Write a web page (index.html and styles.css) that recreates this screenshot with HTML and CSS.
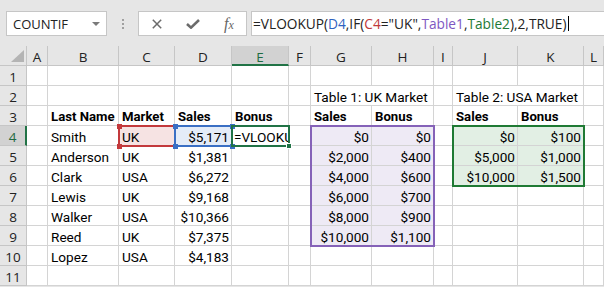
FILE: index.html
```html
<!DOCTYPE html>
<html>
<head>
<meta charset="utf-8">
<link rel="stylesheet" href="styles.css">
</head>
<body>
<div class="app">
  <header class="toolbar">
    <div class="namebox"><span class="name">COUNTIF</span><span class="dd"></span></div>
    <div class="grip"><i></i><i></i><i></i></div>
    <div class="fxbtns">
      <svg class="ico" width="10" height="10" viewBox="0 0 10 10"><path d="M0.8 0.8 L9.2 9.2 M9.2 0.8 L0.8 9.2" stroke="#6b6b6b" stroke-width="1.5" fill="none"/></svg>
      <svg class="ico" width="14" height="10" viewBox="0 0 14 10"><path d="M1 5 L5 8.6 L13 1" stroke="#6b6b6b" stroke-width="2.6" fill="none"/></svg>
      <span class="fx">f<span class="fxx">x</span></span>
    </div>
    <div class="formula"><span>=VLOOKUP(<span class="r-blue">D4</span>,IF(<span class="r-red">C4</span>="UK",<span class="r-purple">Table1</span>,<span class="r-green">Table2</span>),2,TRUE)</span><span class="caret"></span></div>
  </header>
  <div class="sheet">
    <div class="grid">
      <div class="corner"><span class="tri"></span></div>
      <div class="ch">A</div><div class="ch">B</div><div class="ch">C</div><div class="ch">D</div><div class="ch active">E</div><div class="ch">F</div><div class="ch">G</div><div class="ch">H</div><div class="ch">I</div><div class="ch">J</div><div class="ch">K</div><div class="ch">L</div>

      <div class="rh">1</div>
      <div class="c"></div><div class="c"></div><div class="c"></div><div class="c"></div><div class="c"></div><div class="c"></div><div class="c"></div><div class="c"></div><div class="c"></div><div class="c"></div><div class="c"></div><div class="c"></div>

      <div class="rh">2</div>
      <div class="c"></div><div class="c"></div><div class="c"></div><div class="c"></div><div class="c"></div><div class="c"></div>
      <div class="c span2">Table 1: UK Market</div><div class="c"></div><div class="c span2">Table 2: USA Market</div><div class="c"></div>

      <div class="rh">3</div>
      <div class="c"></div><div class="c b">Last Name</div><div class="c b">Market</div><div class="c b">Sales</div><div class="c b">Bonus</div><div class="c"></div>
      <div class="c b">Sales</div><div class="c b">Bonus</div><div class="c"></div><div class="c b">Sales</div><div class="c b">Bonus</div><div class="c"></div>

      <div class="rh active">4</div>
      <div class="c"></div><div class="c">Smith</div><div class="c f-red">UK</div><div class="c n f-blue">$5,171</div><div class="c edit">=VLOOKU</div><div class="c"></div>
      <div class="c n f-purple">$0</div><div class="c n f-purple">$0</div><div class="c"></div><div class="c n f-green">$0</div><div class="c n f-green">$100</div><div class="c"></div>

      <div class="rh">5</div>
      <div class="c"></div><div class="c">Anderson</div><div class="c">UK</div><div class="c n">$1,381</div><div class="c"></div><div class="c"></div>
      <div class="c n f-purple">$2,000</div><div class="c n f-purple">$400</div><div class="c"></div><div class="c n f-green">$5,000</div><div class="c n f-green">$1,000</div><div class="c"></div>

      <div class="rh">6</div>
      <div class="c"></div><div class="c">Clark</div><div class="c">USA</div><div class="c n">$6,272</div><div class="c"></div><div class="c"></div>
      <div class="c n f-purple">$4,000</div><div class="c n f-purple">$600</div><div class="c"></div><div class="c n f-green">$10,000</div><div class="c n f-green">$1,500</div><div class="c"></div>

      <div class="rh">7</div>
      <div class="c"></div><div class="c">Lewis</div><div class="c">UK</div><div class="c n">$9,168</div><div class="c"></div><div class="c"></div>
      <div class="c n f-purple">$6,000</div><div class="c n f-purple">$700</div><div class="c"></div><div class="c"></div><div class="c"></div><div class="c"></div>

      <div class="rh">8</div>
      <div class="c"></div><div class="c">Walker</div><div class="c">USA</div><div class="c n">$10,366</div><div class="c"></div><div class="c"></div>
      <div class="c n f-purple">$8,000</div><div class="c n f-purple">$900</div><div class="c"></div><div class="c"></div><div class="c"></div><div class="c"></div>

      <div class="rh">9</div>
      <div class="c"></div><div class="c">Reed</div><div class="c">UK</div><div class="c n">$7,375</div><div class="c"></div><div class="c"></div>
      <div class="c n f-purple">$10,000</div><div class="c n f-purple">$1,100</div><div class="c"></div><div class="c"></div><div class="c"></div><div class="c"></div>

      <div class="rh">10</div>
      <div class="c"></div><div class="c">Lopez</div><div class="c">USA</div><div class="c n">$4,183</div><div class="c"></div><div class="c"></div>
      <div class="c"></div><div class="c"></div><div class="c"></div><div class="c"></div><div class="c"></div><div class="c"></div>

      <div class="rh">11</div>
      <div class="c"></div><div class="c"></div><div class="c"></div><div class="c"></div><div class="c"></div><div class="c"></div><div class="c"></div><div class="c"></div><div class="c"></div><div class="c"></div><div class="c"></div><div class="c"></div>
    </div>
    <div class="grid overlay">
      <div class="range red rng-c4"><i class="h tl"></i><i class="h tr"></i><i class="h bl"></i><i class="h br"></i></div>
      <div class="range blue rng-d4"><i class="h tl"></i><i class="h tr"></i><i class="h bl"></i><i class="h br"></i></div>
      <div class="range active-cell rng-e4"><i class="h br"></i></div>
      <div class="range purple rng-t1"></div>
      <div class="range green rng-t2"></div>
    </div>
  </div>
</div>
</body>
</html>
```
FILE: styles.css
```css
* { box-sizing: border-box; }
body { margin: 0; background: #fff; font-family: "Open Sans", sans-serif; }

.app { width: 604px; height: 287px; overflow: hidden; background: #e6e6e6; }

.toolbar {
  display: flex;
  align-items: flex-start;
  height: 46px;
  padding: 11px 0 0 6px;
}
.namebox {
  width: 101px; height: 25px;
  background: #fff; border: 1px solid #c6c6c6;
  display: flex; align-items: center; justify-content: space-between;
  padding: 0 6px;
  font-size: 13px; color: #222;
}
.dd { width: 0; height: 0; border-left: 4px solid transparent; border-right: 4px solid transparent; border-top: 4px solid #7a7a7a; }
.grip { width: 31px; height: 25px; display: flex; flex-direction: column; align-items: center; justify-content: center; gap: 2px; }
.grip i { display: block; width: 2px; height: 2px; background: #a0a0a0; }
.fxbtns {
  width: 109px; height: 25px;
  background: #fff; border: 1px solid #c6c6c6;
  display: grid; grid-template-columns: 36px 36px 36px;
  align-items: center; justify-items: center;
}
.fx { font-family: "Liberation Serif", serif; font-style: italic; font-size: 16px; color: #666; line-height: 1; }
.fxx { font-size: 12px; }
.formula {
  flex: 1; margin-left: 4px; height: 25px;
  background: #fff; border: 1px solid #c6c6c6; border-right: none;
  display: flex; align-items: center; padding-left: 1px;
  font-size: 13.7px; color: #222; white-space: nowrap;
}
.caret { display: inline-block; width: 1px; height: 15px; background: #000; margin-left: 1px; }
.r-blue { color: #2f63c0; }
.r-red { color: #c0393b; }
.r-purple { color: #7e57c2; }
.r-green { color: #1d7a35; }

.sheet { position: relative; }
.grid {
  display: grid;
  grid-template-columns: 27px 21px 71px 56px 57px 57px 22px 61px 62px 19px 65px 66px 20px;
  grid-template-rows: repeat(12, 20px);
  background: #fff;
}
.corner, .ch, .rh {
  background: #e6e6e6;
  border-right: 1px solid #c6c6c6; border-bottom: 1px solid #c6c6c6;
  font-size: 13.5px; color: #222;
  display: flex; align-items: center; justify-content: center;
  padding-top: 2px;
}
.corner { justify-content: flex-end; align-items: flex-end; padding: 0 2px 3px 0; }
.tri { width: 0; height: 0; border-left: 13px solid transparent; border-bottom: 12px solid #b4b4b4; }
.ch.active { background: #d2d2d2; border-bottom: 2px solid #217346; color: #1e6b41; padding-top: 3px; }
.rh.active { background: #d2d2d2; border-right: 2px solid #217346; color: #1e6b41; }

.c {
  border-right: 1px solid #d4d4d4; border-bottom: 1px solid #d4d4d4;
  font-family: "Roboto", sans-serif; font-size: 13.6px; color: #000;
  line-height: 22px; padding: 0 2px 0 3px;
  white-space: nowrap; overflow: hidden;
}
.c.b { font-weight: bold; font-size: 13.2px; }
.c.n { text-align: right; }
.c.span2 { grid-column: span 2; }
.c.edit { padding-left: 2px; }
.f-red { background: #f6e3e3; }
.f-blue { background: #e4ecf8; }
.f-purple { background: #eeeaf5; }
.f-green { background: #e2efe4; }

.overlay { position: absolute; inset: 0; background: transparent; pointer-events: none; }
.range { position: relative; margin: -1px; border: 2px solid; }
.red { border-color: #c3393c; }
.blue { border-color: #3a6fc4; }
.active-cell { border-color: #217346; }
.purple { border-color: #8562b8; }
.green { border-color: #1f7a34; }
.rng-c4 { grid-row: 5; grid-column: 4; }
.rng-d4 { grid-row: 5; grid-column: 5; }
.rng-e4 { grid-row: 5; grid-column: 6; }
.rng-t1 { grid-row: 5 / 11; grid-column: 8 / 10; }
.rng-t2 { grid-row: 5 / 8; grid-column: 11 / 13; }
.h { position: absolute; width: 5px; height: 5px; }
.red .h { background: #c3393c; }
.blue .h { background: #3a6fc4; }
.active-cell .h { background: #217346; border: 1px solid #fff; width: 6px; height: 6px; }
.h.tl { top: -3.5px; left: -3.5px; }
.h.tr { top: -3.5px; right: -3.5px; }
.h.bl { bottom: -3.5px; left: -3.5px; }
.h.br { bottom: -3.5px; right: -3.5px; }
```
